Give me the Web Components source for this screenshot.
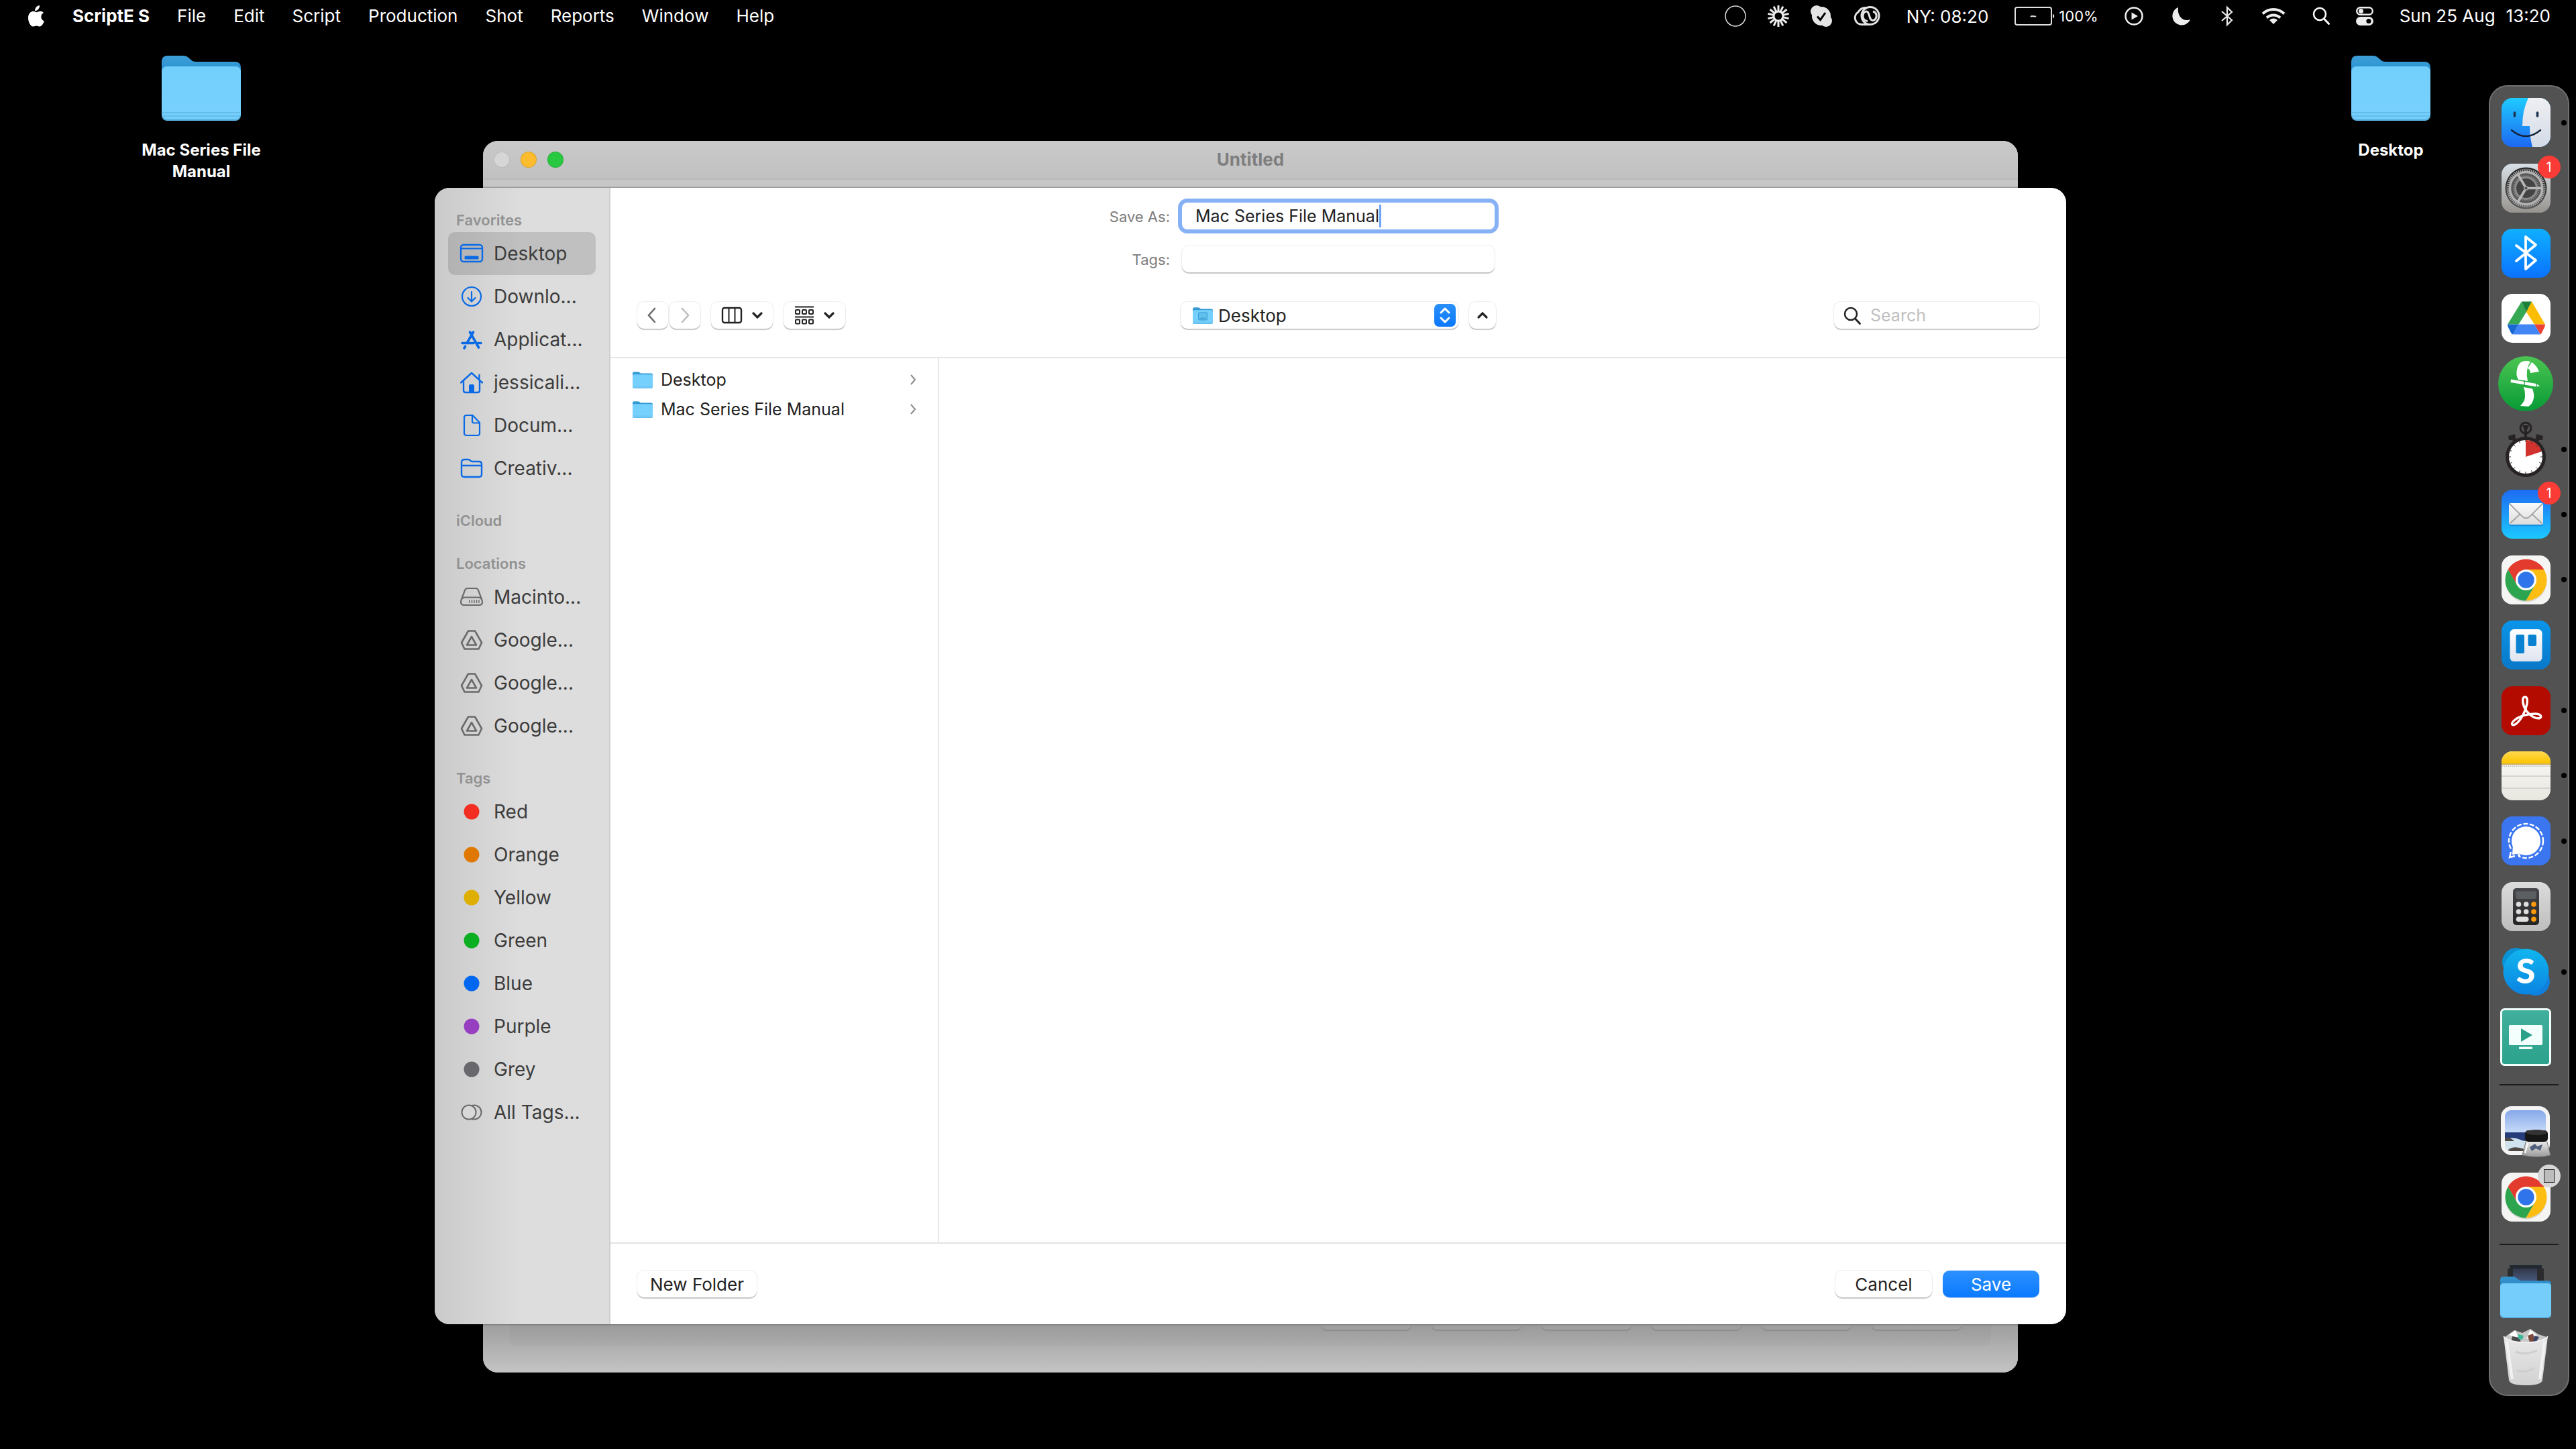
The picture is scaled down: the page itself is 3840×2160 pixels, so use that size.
<!DOCTYPE html>
<html lang="en">
<head>
<meta charset="utf-8">
<title>ScriptE S</title>
<style>
    html, body {
        height: 100%;
        margin: 0;
    }

    body {
        background: #000;
        color: #fff;
        font-family: Inter, "Liberation Sans", sans-serif;
        font-size: 26px;
        overflow: hidden;
    }

    mac-screen {
        height: 100%;
    }
</style>
</head>
<body>

<mac-screen>
    <menu-bar slot="menu"></menu-bar>

    <desktop-folder slot="files">Mac Series File Manual</desktop-folder>
    <desktop-folder slot="files">Desktop</desktop-folder>

    <app-window slot="window" title="Untitled">
        <save-dialog>
            <side-group slot="sidebar" title="Favorites">
                <side-item icon="desktop" selected>Desktop</side-item>
                <side-item icon="download">Downlo...</side-item>
                <side-item icon="apps">Applicat...</side-item>
                <side-item icon="home">jessicali...</side-item>
                <side-item icon="doc">Docum...</side-item>
                <side-item icon="folderline">Creativ...</side-item>
            </side-group>
            <side-group slot="sidebar" title="iCloud"></side-group>
            <side-group slot="sidebar" title="Locations">
                <side-item icon="disk" tint="#6b6b6b">Macinto...</side-item>
                <side-item icon="gdrive" tint="#6b6b6b">Google...</side-item>
                <side-item icon="gdrive" tint="#6b6b6b">Google...</side-item>
                <side-item icon="gdrive" tint="#6b6b6b">Google...</side-item>
            </side-group>
            <side-group slot="sidebar" title="Tags">
                <side-item icon="dot" tint="#f32d22">Red</side-item>
                <side-item icon="dot" tint="#e07800">Orange</side-item>
                <side-item icon="dot" tint="#deae00">Yellow</side-item>
                <side-item icon="dot" tint="#0cae22">Green</side-item>
                <side-item icon="dot" tint="#0068f0">Blue</side-item>
                <side-item icon="dot" tint="#963fc0">Purple</side-item>
                <side-item icon="dot" tint="#68686d">Grey</side-item>
                <side-item icon="alltags" tint="#6b6b6b">All Tags...</side-item>
            </side-group>

            <file-row slot="files">Desktop</file-row>
            <file-row slot="files">Mac Series File Manual</file-row>
        </save-dialog>
    </app-window>

    <dock-bar slot="dock">
        <dock-item icon="finder" label="Finder" running></dock-item>
        <dock-item icon="settings" label="System Settings" badge="1"></dock-item>
        <dock-item icon="bluetoothapp" label="Bluetooth"></dock-item>
        <dock-item icon="drive" label="Google Drive"></dock-item>
        <dock-item icon="finaldraft" label="Final Draft"></dock-item>
        <dock-item icon="timer" label="Timer" running></dock-item>
        <dock-item icon="mail" label="Mail" badge="1" running></dock-item>
        <dock-item icon="chrome" label="Chrome" running></dock-item>
        <dock-item icon="trello" label="Trello"></dock-item>
        <dock-item icon="acrobat" label="Acrobat" running></dock-item>
        <dock-item icon="notes" label="Notes" running></dock-item>
        <dock-item icon="signal" label="Signal" running></dock-item>
        <dock-item icon="calculator" label="Calculator"></dock-item>
        <dock-item icon="skype" label="Skype" running></dock-item>
        <dock-item icon="player" label="Player"></dock-item>
        <hr>
        <dock-item icon="preview" label="Preview"></dock-item>
        <dock-item icon="chrome" label="Chrome app" handoff></dock-item>
        <hr>
        <dock-item icon="stack" label="Folder"></dock-item>
        <dock-item icon="trash" label="Bin"></dock-item>
    </dock-bar>
</mac-screen>

<script>
// rays around the dial of an icon
function ticks(cx, cy, r1, r2, n, attrs) {
    let d = "";
    for (let i = 0; i < n; i++) {
        const a = i * 2 * Math.PI / n;
        const x = Math.sin(a), y = -Math.cos(a);
        d += `M${(cx + x * r1).toFixed(1)} ${(cy + y * r1).toFixed(1)}L${(cx + x * r2).toFixed(1)} ${(cy + y * r2).toFixed(1)}`;
    }
    return `<path d="${d}" fill="none" ${attrs}/>`;
}

function grad(id, from, to) {
    return `<linearGradient id="${id}" x1="0" y1="0" x2="0" y2="1"><stop offset="0" stop-color="${from}"/><stop offset="1" stop-color="${to}"/></linearGradient>`;
}

const FOLDER = `
    <defs>${grad("fb", "#3d9fd8", "#0a7cc4")}${grad("ff", "#72cffc", "#78d0fd")}</defs>
    <path d="M0 10Q0 1 9 1H32Q37 1 40 4L46 9Q48 10 52 10H109Q118 10 118 19V60H0Z" fill="url(#fb)"/>
    <rect y="17" width="118" height="81" rx="8" fill="#5cb6e6"/>
    <rect y="17" width="118" height="78" rx="8" fill="url(#ff)"/>
    <path d="M1 86H117M1 91H117" stroke="#62bdec" stroke-width="2"/>`;

// name: [width, height, markup]
const ICONS = {
    apple: [26, 32, `<path fill="#fff" d="M18 0c.3 2.200-.6 4.300-1.900 5.800-1.300 1.500-3.200 2.500-5 2.300-.3-2.100.8-4.300 2-5.600C14.400 1.100 16.400.1 18 0zM24 10.900c-2.400 1.500-3.700 3.300-3.700 6.100 0 3.200 2 5.500 4.700 6.600-.9 2.500-3.600 7.900-6.700 8-2 0-2.700-1.200-5-1.200s-3.100 1.200-5 1.200C4.600 31.600 1 25.100 1 18.600 1 12.600 4.700 8.900 8.700 8.800c2.100 0 3.600 1.400 4.900 1.400 1.200 0 3.200-1.600 5.800-1.500 1.600.1 3.400.8 4.600 2.200z"/>`],
    ring: [32, 32, `<circle cx="16" cy="16" r="15" fill="none" stroke="#ddd" stroke-width="1.500"/>`],
    sun: [32, 32, ticks(16, 16, 7, 16, 14, `stroke="#eee" stroke-width="3"`) + `<circle cx="16" cy="16" r="7" fill="none" stroke="#eee" stroke-width="3"/>`],
    skypebar: [32, 32, `<circle cx="16" cy="16" r="14" fill="#e4e4e4"/><circle cx="9" cy="9" r="9" fill="#e4e4e4"/><circle cx="23" cy="23" r="9" fill="#e4e4e4"/><path d="M10 16.500l4.500 5L22 11" fill="none" stroke="#000" stroke-width="3"/>`],
    cc: [40, 32, `<g fill="none" stroke="#e4e4e4" stroke-width="3"><circle cx="25" cy="15.500" r="13"/><path d="M25 28.500H12A10 10 0 0 1 7 10 13 13 0 0 1 19 3.500"/><path d="M21 23.500C11 23 13 9 19 9S22 22.500 29 22.500A7 7 0 0 0 29 9"/></g>`],
    battery: [60, 30, `<rect x="1" y="2" width="54" height="26" rx="3" fill="none" stroke="#e0e0e0" stroke-width="2"/><path d="M57 12c3 0 3 6 0 6z" fill="#e0e0e0"/><path d="M24 16c3-3 5 1 8-1" fill="none" stroke="#e0e0e0" stroke-width="2"/>`],
    play: [28, 28, `<circle cx="14" cy="14" r="12.500" fill="none" stroke="#eee" stroke-width="2.500"/><path d="M10.500 8.500L20 14l-9.500 5.500z" fill="#eee"/>`],
    moon: [36, 30, `<path d="M13 2C3 6 2 19 9 25c7 6 18 4 22-5-10 4-20-4-18-18z" fill="#eee"/>`],
    bt: [22, 30, `<path d="M3 8l15 13-7 7V2l7 7L3 22" fill="none" stroke="#e8e8e8" stroke-width="2.200"/>`],
    wifi: [38, 28, `<path d="M3 10.500A23 23 0 0 1 35 10.500M9 16.500A14.500 14.500 0 0 1 29 16.500" fill="none" stroke="#eee" stroke-width="4"/><path d="M19 26l-6-6a8.500 8.500 0 0 1 12 0z" fill="#eee"/>`],
    lens: [26, 28, `<circle cx="11" cy="11" r="9" fill="none" stroke="currentColor" stroke-width="2.500"/><path d="M17.500 18l7 7.500" stroke="currentColor" stroke-width="3" stroke-linecap="round"/>`],
    control: [26, 28, `<rect x="1.200" y="1.200" width="23.600" height="10.600" rx="5.300" fill="none" stroke="#eee" stroke-width="2.400"/><circle cx="7.500" cy="6.500" r="3.500" fill="#eee"/><rect y="15" width="26" height="13" rx="6.500" fill="#eee"/><circle cx="19" cy="21.500" r="3.600" fill="#000"/>`],

    folder: [118, 98, FOLDER],
    desktopfolder: [118, 98, FOLDER + `<rect x="34" y="32" width="50" height="42" rx="5" fill="#62c0ee" stroke="#3a9fd4" stroke-width="5"/><path d="M44 64H74" stroke="#3a9fd4" stroke-width="6"/>`],

    desktop: [36, 36, `<rect x="2" y="5" width="32" height="25" rx="4" fill="none" stroke="currentColor" stroke-width="2.400"/><path d="M2 10.500H34" stroke="currentColor" stroke-width="2"/><rect x="7.500" y="21.500" width="21" height="5" rx="1.500" fill="currentColor"/>`],
    download: [36, 36, `<g fill="none" stroke="currentColor" stroke-width="2.200" stroke-linecap="round" stroke-linejoin="round"><circle cx="18" cy="18" r="14"/><path d="M18 11V25M12.500 20l5.500 5.500 5.500-5.500"/></g>`],
    apps: [36, 36, `<g fill="none" stroke="currentColor" stroke-width="3.600" stroke-linecap="round"><path d="M15.500 7L28.500 30M20.500 7L11 23.500M4 23.500H21M27 23.500H32"/><path d="M8.500 28.500L7 31"/></g>`],
    home: [36, 36, `<g fill="none" stroke="currentColor" stroke-width="2.400" stroke-linecap="round" stroke-linejoin="round"><path d="M2 18.500L18 4l16 14.500M6 16V30q0 3 3 3H27q3 0 3-3V16M29.500 12V7"/></g><path d="M14 33V23q0-2 2-2h4q2 0 2 2V33z" fill="currentColor"/>`],
    doc: [36, 36, `<path d="M11 3H19.500L30 14V30q0 3-3 3H11q-4 0-4-3V6q0-3 4-3zM19 3.500V12q0 2.500 2.500 2.500H30" fill="none" stroke="currentColor" stroke-width="2.200" stroke-linejoin="round"/>`],
    folderline: [36, 36, `<path d="M3 27V9q0-4 4-4h6q2 0 3 1.500T19 8H29q4 0 4 4V27q0 4-4 4H7q-4 0-4-4zM3 14H33" fill="none" stroke="currentColor" stroke-width="2.400"/>`],
    disk: [36, 36, `<path d="M12 5H24q3 0 4 3l5 13q1 3 1 4 0 5-5 5H7q-5 0-5-5 0-1 1-4L8 8q1-3 4-3zM3 22q1-3.500 5-3.500H28q4 0 5 3.500" fill="none" stroke="currentColor" stroke-width="2.200"/><path d="M15 22v5M18.500 22v5M22 22v5M25.500 22v5M29 22v5" stroke="currentColor" stroke-width="1.400"/>`],
    gdrive: [36, 36, `<path d="M13 4.500H23L33 22l-4.500 9.500H7.500L3 22zM18 13L11 25.500H25z" fill="none" stroke="currentColor" stroke-width="2.600" stroke-linejoin="round"/>`],
    dot: [36, 36, `<circle cx="18" cy="18" r="11.500" fill="currentColor"/>`],
    alltags: [36, 36, `<circle cx="22" cy="18" r="10.500" fill="none" stroke="currentColor" stroke-width="2"/><circle cx="14" cy="18" r="10.500" fill="#d8d8d8" stroke="currentColor" stroke-width="2"/>`],

    left: [14, 24, `<path d="M10 2L1 12l9 10" fill="none" stroke="#6b6b6b" stroke-width="2.600" stroke-linecap="round"/>`],
    right: [14, 24, `<path d="M3 2l9 10-9 10" fill="none" stroke="#bdbdbd" stroke-width="2.600" stroke-linecap="round"/>`],
    more: [10, 16, `<path d="M2 1l6 7-6 7" fill="none" stroke="#8a8a8a" stroke-width="2"/>`],
    down: [16, 12, `<path d="M2 3l6 6 6-6" fill="none" stroke="#222" stroke-width="3.200" stroke-linecap="round"/>`],
    up: [16, 12, `<path d="M2 9l6-6 6 6" fill="none" stroke="#222" stroke-width="3.200" stroke-linecap="round"/>`],
    columns: [32, 26, `<rect x="2" y="2" width="28" height="22" rx="3" fill="none" stroke="#222" stroke-width="2.400"/><path d="M11.500 2V24M20.500 2V24" stroke="#222" stroke-width="2"/>`],
    grid: [30, 28, `<g fill="none" stroke="#222" stroke-width="2"><path d="M1 1.500H29M1 16.500H29"/><rect x="2" y="6" width="6" height="6" rx="1"/><rect x="12" y="6" width="6" height="6" rx="1"/><rect x="22" y="6" width="6" height="6" rx="1"/><rect x="2" y="20.500" width="6" height="6" rx="1"/><rect x="12" y="20.500" width="6" height="6" rx="1"/><rect x="22" y="20.500" width="6" height="6" rx="1"/></g>`],
    updown: [32, 34, `<defs>${grad("u", "#2a90fb", "#0a78fa")}</defs><rect width="32" height="34" rx="7" fill="url(#u)"/><path d="M10 13l6-6 6 6M10 21l6 6 6-6" fill="none" stroke="#fff" stroke-width="3" stroke-linecap="round" stroke-linejoin="round"/>`],

    finder: [73, 73, `<defs>${grad("b", "#1ecbff", "#1d68f2")}${grad("w", "#efeff2", "#d3dbe8")}<clipPath id="c"><rect width="73" height="73" rx="16"/></clipPath></defs>
        <g clip-path="url(#c)"><rect width="73" height="73" fill="url(#b)"/><path d="M40 0Q31 18 31 42H42Q42 58 46 73H73V0Z" fill="url(#w)"/></g>
        <path d="M19.500 22V27M53.500 22V27" stroke="#1c3550" stroke-width="3.600" stroke-linecap="round"/><path d="M15 48Q36 66 58 48" fill="none" stroke="#15233a" stroke-width="2.400" stroke-linecap="round"/>`],
    settings: [73, 73, `<defs>${grad("s", "#d8e0e6", "#97948f")}${grad("k", "#222", "#555")}</defs><rect width="73" height="73" rx="16" fill="url(#s)"/>
        <circle cx="36.500" cy="36.500" r="31" fill="url(#k)"/>${ticks(36.5, 36.5, 25, 29, 60, 'stroke="#aaa" stroke-width="1.600"')}
        <circle cx="36.500" cy="36.500" r="24" fill="#555" stroke="#b2b2b2" stroke-width="3.500"/>
        <circle cx="36.500" cy="36.500" r="16" fill="#444" stroke="#8c8c8c" stroke-width="3"/>${ticks(36.5, 36.5, 17, 20, 40, 'stroke="#8c8c8c" stroke-width="1.200"')}
        <path d="M36.500 36.500H60M36.500 36.500L24.500 16M36.500 36.500L24.500 57" stroke="#b8b8b8" stroke-width="3.600"/><circle cx="36.500" cy="36.500" r="3.500" fill="#999"/><circle cx="36.500" cy="36.500" r="1.500" fill="#333"/>`],
    bluetoothapp: [73, 73, `<defs>${grad("b", "#0fb0ff", "#0a72ff")}</defs><rect width="73" height="73" rx="16" fill="url(#b)"/><path d="M22 25L51 47 36 60V12L51 24 22 48" fill="none" stroke="#fff" stroke-width="3.800" stroke-linecap="round" stroke-linejoin="round"/>`],
    drive: [73, 73, `<rect width="73" height="73" rx="16" fill="#fff"/>
        <path d="M30 11.500L9 45.500H25.500L37 27z" fill="#34a853"/><path d="M30 11.500H45L37 27.500z" fill="#188038"/>
        <path d="M45 11.500L65 45.500H49L37 27z" fill="#fbbc04"/><path d="M17 60.500L25.500 45.500H49L58 60.500z" fill="#4285f4"/>
        <path d="M9 45.500H25.500L17 60.500Q15 60 14 58L9.500 49z" fill="#1967d2"/><path d="M65 45.500H49L58 60.500Q59 60 60 58L64.500 49z" fill="#ea4335"/>`],
    finaldraft: [82, 82, `<defs>${grad("g", "#4cc552", "#079a36")}</defs><circle cx="41" cy="41" r="41" fill="url(#g)"/>
        <g fill="#fff"><path d="M36 8Q42 6 48 8 40 20 44 37L30 35Q26 28 28 20 30 10 36 8z"/><path d="M50 9Q57 13 61 23L48 25Q48 20 44 18z"/><path d="M19 34.500L57 41 62 44.500 57 45.500 18.500 39z"/><path d="M38 46L51 48.500Q55 58 52 66 50 72 45 75L33 74Q41 66 40 58 40 51 38 46z"/></g><path d="M39 36v8M57 40v6" stroke="#12a03c" stroke-width="1.200"/>`],
    timer: [60, 84, `<circle cx="30" cy="10" r="8" fill="none" stroke="#272324" stroke-width="3"/><path d="M25 6H35L32 13V24H28V13z" fill="#272324"/>
        <path d="M4 22l10-3 1 6 3 4-4 4-4-5-5 0zM56 22l-10-3-1 6-3 4 4 4 4-5 5 0z" fill="#272324"/>
        <circle cx="30" cy="53" r="27.500" fill="#fff" stroke="#272324" stroke-width="5"/><path d="M30 53V28A25 25 0 0 1 54 45z" fill="#d2322e"/>${ticks(30, 53, 22, 25, 16, 'stroke="#333" stroke-width="1"')}`],
    mail: [73, 73, `<defs>${grad("m", "#1d6bf2", "#1cc8ff")}${grad("e", "#fafafa", "#dcdcdc")}</defs><rect width="73" height="73" rx="16" fill="url(#m)"/>
        <rect x="11" y="22" width="51" height="32" rx="3" fill="#0b5db8" opacity=".4"/><rect x="11" y="20" width="51" height="32" rx="3" fill="url(#e)"/>
        <path d="M13 50L28 36M60 50L45 36M12 21L31 40Q36.500 45 42 40L61 21" fill="none" stroke="#a4a4a4" stroke-width="1.800"/>`],
    chrome: [73, 73, `<rect width="73" height="73" rx="16" fill="#f5f5f3"/><circle cx="36.500" cy="38.500" r="31" fill="#000" opacity=".12"/>
        <path d="M9.700 21A31 31 0 0 1 63.300 21H36.500L23.100 44.200z" fill="#e33b2e"/><path d="M9.700 21L23.100 44.200H49.900L36.500 67.500A31 31 0 0 1 9.700 21z" fill="#2da44e"/>
        <path d="M63.300 21H36.500L49.900 44.200 36.500 67.500A31 31 0 0 0 63.300 21z" fill="#fdbd13"/><circle cx="36.500" cy="36.500" r="15.500" fill="#fff"/><circle cx="36.500" cy="36.500" r="12.200" fill="#2f74ea"/>`],
    trello: [73, 73, `<defs>${grad("t", "#0a95ea", "#0a78c8")}${grad("w", "#fff", "#dfe4f0")}</defs><rect width="73" height="73" rx="16" fill="url(#t)"/>
        <rect x="12.500" y="13" width="48" height="48" rx="6" fill="url(#w)"/><rect x="21.500" y="21" width="12.500" height="28" rx="2" fill="#0a82d2"/><rect x="39.500" y="21" width="12.500" height="17" rx="2" fill="#0a82d2"/>`],
    acrobat: [73, 73, `<rect width="73" height="73" rx="16" fill="#b30b00"/><path d="M34.500 16C30 17 31 28 37 36.500 43 45 52 49 57 47.500 61 45.500 58 41 50 41 39 41 27 44.500 20 50 13 55.500 15 60 21 56.500 29 51 36 37 38 26 39 18 37.500 15.500 34.500 16z" fill="none" stroke="#fff" stroke-width="3.400" stroke-linejoin="round"/>`],
    notes: [73, 73, `<defs>${grad("y", "#ffd94f", "#fcc400")}${grad("p", "#fafaf8", "#e8e6df")}<clipPath id="c"><rect width="73" height="73" rx="16"/></clipPath></defs>
        <g clip-path="url(#c)"><rect width="73" height="73" fill="url(#p)"/><rect width="73" height="18" fill="url(#y)"/><path d="M0 19H73" stroke="#c39b2a" stroke-width="1.400"/><path d="M1 22H73" stroke="#c4c2bd" stroke-width="2" stroke-dasharray="1.500 1.500"/><path d="M0 37H73M0 55H73" stroke="#cfcdc8" stroke-width="1.400"/></g>`],
    signal: [73, 73, `<rect width="73" height="73" rx="16" fill="#3b76f0"/><circle cx="36.500" cy="36.500" r="25.500" fill="none" stroke="#fff" stroke-width="2.400" stroke-dasharray="7 2.600"/>
        <path d="M9 48L25 50V63L9 64z" fill="#3b76f0"/><path d="M14 53L12 61 20 59M24 57l4 1" fill="none" stroke="#fff" stroke-width="2.400"/>
        <circle cx="36.500" cy="36.500" r="21.500" fill="#fff"/><path d="M17 44L16 57 30 55z" fill="#fff"/>`],
    calculator: [73, 73, `<defs>${grad("s", "#dcdcdc", "#bdbdbd")}${grad("d", "#48484c", "#242426")}</defs><rect width="73" height="73" rx="16" fill="url(#s)"/>
        <rect x="17" y="9" width="39" height="55" rx="5" fill="url(#d)"/><rect x="21.500" y="13.500" width="30" height="11.500" rx="2" fill="#5c5f62"/>
        <g fill="#dedede"><circle cx="25.500" cy="33" r="3.800"/><circle cx="36.700" cy="33" r="3.800"/><circle cx="25.500" cy="44" r="3.800"/><circle cx="36.700" cy="44" r="3.800"/><rect x="21.700" y="51.500" width="18.800" height="7.600" rx="3.800"/></g>
        <g fill="#ff9a0a"><circle cx="48" cy="33" r="3.800"/><circle cx="48" cy="44" r="3.800"/><circle cx="48" cy="55.300" r="3.800"/></g>`],
    skype: [73, 73, `<defs>${grad("s", "#11b5ef", "#0a84e2")}</defs><circle cx="22" cy="22" r="21" fill="#0b92d6"/><circle cx="51" cy="51" r="21" fill="#0f80dc"/><circle cx="36.500" cy="36.500" r="34" fill="url(#s)"/>
        <text x="36" y="54" text-anchor="middle" font-family="Lato, sans-serif" font-weight="900" font-size="52" fill="#fff">S</text>`],
    player: [76, 86, `<defs>${grad("t", "#41b09c", "#2ba18b")}</defs><rect x="1.500" y="1.500" width="73" height="83" rx="5" fill="url(#t)" stroke="#f0fffb" stroke-width="3"/>
        <rect x="13" y="25" width="50" height="30" rx="2" fill="#f2fffd"/><path d="M31 30L48 40 31 50z" fill="#2ba18b"/><rect x="28" y="57.500" width="20" height="3.500" rx="1" fill="#f2fffd"/>`],
    preview: [76, 76, `<defs>${grad("k", "#86a8ea", "#c9dcf8")}${grad("j", "#f2f2f2", "#9a9a9a")}</defs><rect x="1" width="73" height="73" rx="16" fill="#f4f4f4"/>
        <clipPath id="p"><rect x="7" y="6" width="61" height="61" rx="9"/></clipPath><g clip-path="url(#p)"><rect x="7" y="6" width="61" height="34" fill="url(#k)"/><rect x="7" y="39" width="61" height="14" fill="#253c78"/><path d="M7 49Q20 45 30 50T50 48L68 49V67H7z" fill="#cfe2ee"/><path d="M7 47q8-1 14 5H7zM12 65q8-7 24-1v3H12z" fill="#4f4a45"/></g>
        <path d="M39 50H69L75 73Q57 78 33 73z" fill="url(#j)" stroke="#777"/><path d="M44 61l8-5 3 4 8-3-3 9-7-3-6 4z" fill="#50607c"/><path d="M41 55L37 70" stroke="#fff" stroke-width="2"/>
        <rect x="37" y="36" width="34" height="17" rx="5" fill="#161616"/><ellipse cx="54" cy="39" rx="16" ry="4" fill="#333"/>`],
    stack: [76, 80, `<defs>${grad("sb", "#3694cd", "#2078b4")}${grad("n", "#33384a", "#4c6188")}</defs><rect x="14" y="0" width="48" height="26" fill="#222831"/><rect x="11" y="5" width="54" height="24" fill="#2b2b2d"/><rect x="19" y="5" width="36" height="24" fill="url(#n)"/>
        <path d="M0 22q0-5 5-5H18q4 0 6 2l4 3q1 1 4 1H71q5 0 5 5V50H0z" fill="url(#sb)"/><rect y="27" width="76" height="52" rx="5" fill="#58b0e2"/><rect y="27" width="76" height="50" rx="5" fill="#75cdfb"/>`],
    trash: [66, 84, `<defs>${grad("w", "#e8e8e8", "#d2d2d2")}</defs><path d="M2 12L16 2 28 6 40 0 52 8 64 12 54 22H10z" fill="#c8c8c8"/>
        <path d="M8 9L18 2 22 14zM34 15L40 1 50 10z" fill="#fff"/><path d="M13 11l11 2 2 8H11z" fill="#4a4a4a"/><path d="M22 8l8 2-2 6-6-1z" fill="#38b99a"/><path d="M36 10l8-3 3 11-8 2z" fill="#7a4b3c"/><path d="M46 10l7 2-4 7h-5z" fill="#3b4566"/>
        <path d="M0 11Q8 20 33 20T66 11L58 76Q57 84 33 84T8 76z" fill="url(#w)"/><path d="M5 19L13 75M61 19L54 75" stroke="#f2f2f2" stroke-width="4" fill="none"/><path d="M18 34q14 6 32-2M20 62q14 4 26-4" stroke="#cecece" stroke-width="3" fill="none"/><path d="M0 11Q8 20 33 20T66 11" fill="none" stroke="#f6f6f6" stroke-width="1.500"/>`]
};

class MacIcon extends HTMLElement {
    constructor() {
        super();
        this.attachShadow({mode: "open"});
    }

    connectedCallback() {
        const [w, h, markup] = ICONS[this.getAttribute("name")];
        const width = Number(this.getAttribute("width")) || w;
        this.shadowRoot.innerHTML = `
            <style>
            :host {
                display: block;
                flex: none;
            }
            svg {
                display: block;
                overflow: visible;
            }
            </style>
            <svg width="${width}" height="${Math.round(h * width / w)}" viewBox="0 0 ${w} ${h}" aria-hidden="true">${markup}</svg>
        `;
    }
}

class MacScreen extends HTMLElement {
    constructor() {
        super();
        this.attachShadow({mode: "open"});
    }

    connectedCallback() {
        this.shadowRoot.innerHTML = `
            <style>
            :host {
                display: flex;
                flex-direction: column;
            }
            main {
                position: relative;
                flex: 1;
                display: flex;
                min-height: 0;
            }
            .files {
                flex: 1;
                display: flex;
                justify-content: space-between;
                align-items: flex-start;
                padding: 34px 26px 0 180px;
            }
            .dock {
                flex: none;
                display: flex;
                align-items: center;
                padding-right: 10px;
            }
            </style>
            <slot name="menu"></slot>
            <main>
                <div class="files"><slot name="files"></slot></div>
                <slot name="window"></slot>
                <div class="dock"><slot name="dock"></slot></div>
            </main>
        `;
    }
}

class MenuBar extends HTMLElement {
    constructor() {
        super();
        this.attachShadow({mode: "open"});
    }

    connectedCallback() {
        const menus = ["File", "Edit", "Script", "Production", "Shot", "Reports", "Window", "Help"];
        this.shadowRoot.innerHTML = `
            <style>
            :host {
                display: flex;
                justify-content: space-between;
                align-items: center;
                height: 48px;
                padding: 0 38px 0 41px;
                color: #fff;
            }
            nav, .status, .tray {
                display: flex;
                align-items: center;
            }
            nav {
                gap: 41px;
            }
            .status {
                gap: 39px;
            }
            .tray {
                gap: 32px;
            }
            button {
                border: 0;
                padding: 0;
                background: none;
                color: inherit;
                font: inherit;
                line-height: 32px;
                white-space: nowrap;
            }
            .app {
                font-weight: 700;
            }
            .battery, .clock {
                display: flex;
                align-items: center;
                gap: 6px;
            }
            .battery {
                font-size: 22px;
            }
            .clock {
                gap: 16px;
            }
            </style>
            <nav>
                <button aria-label="Apple menu"><mac-icon name="apple"></mac-icon></button>
                <button class="app">ScriptE S</button>
                ${menus.map(m => `<button>${m}</button>`).join("")}
            </nav>
            <div class="status">
                <div class="tray">
                    <mac-icon name="ring"></mac-icon>
                    <mac-icon name="sun"></mac-icon>
                    <mac-icon name="skypebar"></mac-icon>
                    <mac-icon name="cc"></mac-icon>
                </div>
                <span>NY: 08:20</span>
                <span class="battery"><mac-icon name="battery"></mac-icon>100%</span>
                <mac-icon name="play"></mac-icon>
                <mac-icon name="moon"></mac-icon>
                <mac-icon name="bt"></mac-icon>
                <mac-icon name="wifi"></mac-icon>
                <mac-icon name="lens"></mac-icon>
                <mac-icon name="control"></mac-icon>
                <button class="clock"><span>Sun 25 Aug</span><span>13:20</span></button>
            </div>
        `;
    }
}

class DesktopFolder extends HTMLElement {
    constructor() {
        super();
        this.attachShadow({mode: "open"});
    }

    connectedCallback() {
        this.shadowRoot.innerHTML = `
            <style>
            :host {
                display: flex;
                flex-direction: column;
                align-items: center;
                gap: 28px;
                width: 240px;
                font-size: 24px;
                font-weight: 700;
                line-height: 32px;
                text-align: center;
            }
            </style>
            <mac-icon name="folder"></mac-icon>
            <span><slot></slot></span>
        `;
    }
}

class AppWindow extends HTMLElement {
    constructor() {
        super();
        this.attachShadow({mode: "open"});
    }

    connectedCallback() {
        this.shadowRoot.innerHTML = `
            <style>
            :host {
                position: absolute;
                inset: 162px 832px 114px 720px;
                display: flex;
                flex-direction: column;
                justify-content: space-between;
                border-radius: 22px;
                background: #c6c6c6;
                overflow: visible;
            }
            header {
                display: grid;
                grid-template-columns: 1fr auto 1fr;
                align-items: center;
                height: 56px;
                padding: 0 16px;
                border-bottom: 2px solid #b9b9b9;
                border-radius: 22px 22px 0 0;
                background: linear-gradient(#c9c9c9, #c1c1c1);
                color: #7e7e7e;
            }
            h1 {
                margin: 0;
                font-size: 26px;
                font-weight: 700;
                line-height: 32px;
            }
            .lights {
                display: flex;
                gap: 16px;
            }
            .lights button {
                width: 24px;
                height: 24px;
                padding: 0;
                border: 1px solid rgba(0, 0, 0, .12);
                border-radius: 50%;
                background: #d6d6d6;
            }
            .lights .min {
                background: #fdbc2e;
            }
            .lights .max {
                background: #28c840;
            }
            footer {
                box-sizing: border-box;
                height: 72px;
                padding: 0 40px;
                border-radius: 0 0 22px 22px;
                background: linear-gradient(#9e9e9e, #c4c4c4);
            }
            .well {
                display: flex;
                justify-content: flex-end;
                gap: 30px;
                height: 32px;
                padding-right: 44px;
                border-radius: 0 0 10px 10px;
                background: rgba(0, 0, 0, .02);
            }
            .well i {
                width: 134px;
                height: 8px;
                border-radius: 0 0 8px 8px;
                background: rgba(255, 255, 255, .04);
                box-shadow: 0 2px 1px rgba(0, 0, 0, .12);
            }
            slot {
                position: absolute;
                display: block;
                inset: 70px -72px 72px;
            }
            </style>
            <header>
                <div class="lights">
                    <button aria-label="Close"></button>
                    <button class="min" aria-label="Minimise"></button>
                    <button class="max" aria-label="Zoom"></button>
                </div>
                <h1>${this.title}</h1>
            </header>
            <footer>
                <div class="well"><i></i><i></i><i></i><i></i><i></i><i></i></div>
            </footer>
            <slot></slot>
        `;
    }
}

class SideGroup extends HTMLElement {
    constructor() {
        super();
        this.attachShadow({mode: "open"});
    }

    connectedCallback() {
        this.shadowRoot.innerHTML = `
            <style>
            :host {
                display: block;
            }
            h2 {
                margin: 0 0 2px;
                padding-left: 12px;
                color: #929292;
                font-size: 22px;
                font-weight: 600;
                line-height: 32px;
            }
            </style>
            <h2>${this.title}</h2>
            <slot></slot>
        `;
    }
}

class SideItem extends HTMLElement {
    constructor() {
        super();
        this.attachShadow({mode: "open"});
    }

    connectedCallback() {
        this.shadowRoot.innerHTML = `
            <style>
            :host {
                display: block;
            }
            button {
                display: flex;
                align-items: center;
                gap: 15px;
                width: 100%;
                height: 64px;
                padding: 0 0 0 17px;
                border: 0;
                border-radius: 10px;
                background: none;
                color: #3c3c3c;
                font: inherit;
                font-size: 28px;
                white-space: nowrap;
            }
            :host([selected]) button {
                background: rgba(0, 0, 0, .13);
            }
            mac-icon {
                color: ${this.getAttribute("tint") || "#0a6ae6"};
            }
            </style>
            <button><mac-icon name="${this.getAttribute("icon")}"></mac-icon><slot></slot></button>
        `;
    }
}

class FileRow extends HTMLElement {
    constructor() {
        super();
        this.attachShadow({mode: "open"});
    }

    connectedCallback() {
        this.shadowRoot.innerHTML = `
            <style>
            :host {
                display: block;
            }
            button {
                display: flex;
                align-items: center;
                gap: 12px;
                width: 100%;
                height: 44px;
                padding: 0 32px 0 33px;
                border: 0;
                background: none;
                color: #222;
                font: inherit;
                font-size: 25px;
                text-align: left;
            }
            span {
                flex: 1;
            }
            </style>
            <button><mac-icon name="folder" width="30"></mac-icon><span><slot></slot></span><mac-icon name="more"></mac-icon></button>
        `;
    }
}

class SaveDialog extends HTMLElement {
    constructor() {
        super();
        this.attachShadow({mode: "open"});
    }

    connectedCallback() {
        this.render();
        this.placeCaret();
    }

    // the caret stands after the last letter of the file name
    placeCaret() {
        const input = this.shadowRoot.querySelector("#name");
        const ctx = document.createElement("canvas").getContext("2d");
        ctx.font = "25px Inter, 'Liberation Sans', sans-serif";
        const width = Math.round(ctx.measureText(input.value).width);
        this.shadowRoot.querySelector(".caret").style.left = `${20 + width}px`;
    }

    render() {
        this.shadowRoot.innerHTML = `
            <style>
            :host {
                display: flex;
                height: 100%;
                border-radius: 22px;
                overflow: hidden;
                background: #fff;
                color: #222;
                box-shadow: 0 0 3px rgba(0, 0, 0, .6);
            }
            aside {
                box-sizing: border-box;
                flex: none;
                display: flex;
                flex-direction: column;
                gap: 30px;
                width: 262px;
                padding: 32px 20px 0;
                border-right: 2px solid #cfcfcf;
                background: linear-gradient(90deg, #cacaca, #dddddd 130px);
            }
            .main {
                flex: 1;
                display: flex;
                flex-direction: column;
            }
            .top {
                display: flex;
                flex-direction: column;
                gap: 24px;
                padding: 22px 40px 42px;
                border-bottom: 2px solid #e5e5e5;
            }
            .row {
                display: grid;
                grid-template-columns: 1fr 470px 1fr;
                align-items: center;
            }
            .tools {
                margin-top: 20px;
            }
            label {
                justify-self: end;
                padding: 2px 16px 0 0;
                color: #7d7d7d;
                font-size: 22px;
                line-height: 28px;
            }
            .field {
                position: relative;
                margin: 0 2px;
            }
            input, select, button {
                box-sizing: border-box;
                height: 40px;
                margin: 0;
                border: 0;
                border-radius: 10px;
                background: #fff;
                box-shadow: 0 0 0 1px rgba(0, 0, 0, .06), 0 2px 1px rgba(0, 0, 0, .2);
                color: #222;
                font: inherit;
                outline: 0;
            }
            input {
                display: block;
                width: 100%;
                padding: 0 20px;
                font-size: 25px;
            }
            #name {
                border-radius: 8px;
                box-shadow: 0 0 0 6px #86b1f5;
            }
            .caret {
                position: absolute;
                top: 3px;
                width: 3px;
                height: 34px;
                background: #6ea4f4;
            }
            .group {
                display: flex;
                align-items: center;
                gap: 16px;
            }
            .pair {
                display: flex;
                gap: 2px;
            }
            button {
                display: flex;
                align-items: center;
                justify-content: center;
                gap: 14px;
                padding: 0;
            }
            .pair button {
                width: 46px;
            }
            .view {
                width: 92px;
            }
            .place {
                position: relative;
                flex: 1;
            }
            select {
                display: block;
                width: 100%;
                padding: 0 56px;
                appearance: none;
            }
            .place mac-icon, .search mac-icon {
                position: absolute;
                pointer-events: none;
            }
            .place .icon {
                left: 18px;
                top: 8px;
            }
            .place .arrows {
                right: 4px;
                top: 3px;
            }
            .toggle {
                width: 40px;
            }
            .search {
                position: relative;
                justify-self: end;
                width: 306px;
            }
            .search input {
                padding-left: 54px;
            }
            .search mac-icon {
                left: 14px;
                top: 7px;
            }
            ::placeholder {
                color: #bfbfbf;
                opacity: 1;
            }
            .body {
                flex: 1;
                display: flex;
            }
            .column {
                box-sizing: border-box;
                width: 490px;
                padding-top: 10px;
                border-right: 2px solid #e5e5e5;
            }
            .bottom {
                display: flex;
                gap: 16px;
                padding: 40px;
                border-top: 2px solid #e3e3e3;
            }
            .bottom button {
                width: 144px;
            }
            .bottom .new {
                width: 178px;
                margin-right: auto;
            }
            .bottom .save {
                background: linear-gradient(#2d91ff, #0a7aff);
                box-shadow: 0 1px 1px rgba(0, 80, 200, .3);
                color: #fff;
            }
            </style>
            <aside><slot name="sidebar"></slot></aside>
            <div class="main">
                <div class="top">
                    <div class="row">
                        <label for="name">Save As:</label>
                        <div class="field"><input id="name" type="text" value="Mac Series File Manual"><span class="caret"></span></div>
                    </div>
                    <div class="row">
                        <label for="tags">Tags:</label>
                        <div class="field"><input id="tags" type="text"></div>
                    </div>
                    <div class="row tools">
                        <div class="group">
                            <div class="pair">
                                <button aria-label="Back"><mac-icon name="left"></mac-icon></button>
                                <button aria-label="Forward"><mac-icon name="right"></mac-icon></button>
                            </div>
                            <button class="view" aria-label="Column view"><mac-icon name="columns"></mac-icon><mac-icon name="down"></mac-icon></button>
                            <button class="view" aria-label="Group items"><mac-icon name="grid"></mac-icon><mac-icon name="down"></mac-icon></button>
                        </div>
                        <div class="group">
                            <div class="place">
                                <select aria-label="Where"><option>Desktop</option></select>
                                <mac-icon class="icon" name="desktopfolder" width="30"></mac-icon>
                                <mac-icon class="arrows" name="updown"></mac-icon>
                            </div>
                            <button class="toggle" aria-label="Show less"><mac-icon name="up"></mac-icon></button>
                        </div>
                        <div class="search">
                            <input type="search" placeholder="Search" aria-label="Search">
                            <mac-icon name="lens"></mac-icon>
                        </div>
                    </div>
                </div>
                <div class="body">
                    <div class="column"><slot name="files"></slot></div>
                </div>
                <div class="bottom">
                    <button class="new">New Folder</button>
                    <button>Cancel</button>
                    <button class="save">Save</button>
                </div>
            </div>
        `;
    }
}

class DockBar extends HTMLElement {
    constructor() {
        super();
        this.attachShadow({mode: "open"});
    }

    connectedCallback() {
        this.shadowRoot.innerHTML = `
            <style>
            :host {
                box-sizing: border-box;
                display: flex;
                flex-direction: column;
                width: 120px;
                height: calc(100% - 158px);
                padding: 5px 0 7px;
                border: 2px solid #707070;
                border-radius: 28px;
                background: #525252;
            }
            ::slotted(dock-item) {
                flex: 1;
            }
            ::slotted(hr) {
                align-self: stretch;
                height: 2px;
                margin: 21px 14px;
                border: 0;
                background: #1c1c1c;
            }
            </style>
            <slot></slot>
        `;
    }
}

class DockItem extends HTMLElement {
    constructor() {
        super();
        this.attachShadow({mode: "open"});
    }

    connectedCallback() {
        const badge = this.getAttribute("badge");
        this.shadowRoot.innerHTML = `
            <style>
            :host {
                position: relative;
                display: flex;
                align-items: center;
                justify-content: center;
                padding-right: 10px;
                min-height: 0;
            }
            button {
                position: relative;
                padding: 0;
                border: 0;
                background: none;
                font: inherit;
            }
            .badge {
                position: absolute;
                top: -12px;
                right: -15px;
                display: flex;
                align-items: center;
                justify-content: center;
                width: 34px;
                height: 34px;
                border-radius: 50%;
                background: #fb3b35;
                color: #fff;
                font-size: 20px;
            }
            .handoff {
                background: #d6d6d6;
            }
            .handoff i {
                width: 14px;
                height: 18px;
                border: 1px solid #222;
                background: #bcbcbc;
            }
            .run {
                position: absolute;
                right: 2px;
                width: 8px;
                height: 8px;
                border-radius: 50%;
                background: #000;
            }
            </style>
            <button aria-label="${this.getAttribute("label")}">
                <mac-icon name="${this.getAttribute("icon")}"></mac-icon>
                ${badge ? `<span class="badge">${badge}</span>` : ""}
                ${this.hasAttribute("handoff") ? `<span class="badge handoff"><i></i></span>` : ""}
            </button>
            ${this.hasAttribute("running") ? `<span class="run"></span>` : ""}
        `;
    }
}

customElements.define("mac-icon", MacIcon);
customElements.define("mac-screen", MacScreen);
customElements.define("menu-bar", MenuBar);
customElements.define("desktop-folder", DesktopFolder);
customElements.define("app-window", AppWindow);
customElements.define("side-group", SideGroup);
customElements.define("side-item", SideItem);
customElements.define("file-row", FileRow);
customElements.define("save-dialog", SaveDialog);
customElements.define("dock-bar", DockBar);
customElements.define("dock-item", DockItem);
</script>
</body>
</html>
